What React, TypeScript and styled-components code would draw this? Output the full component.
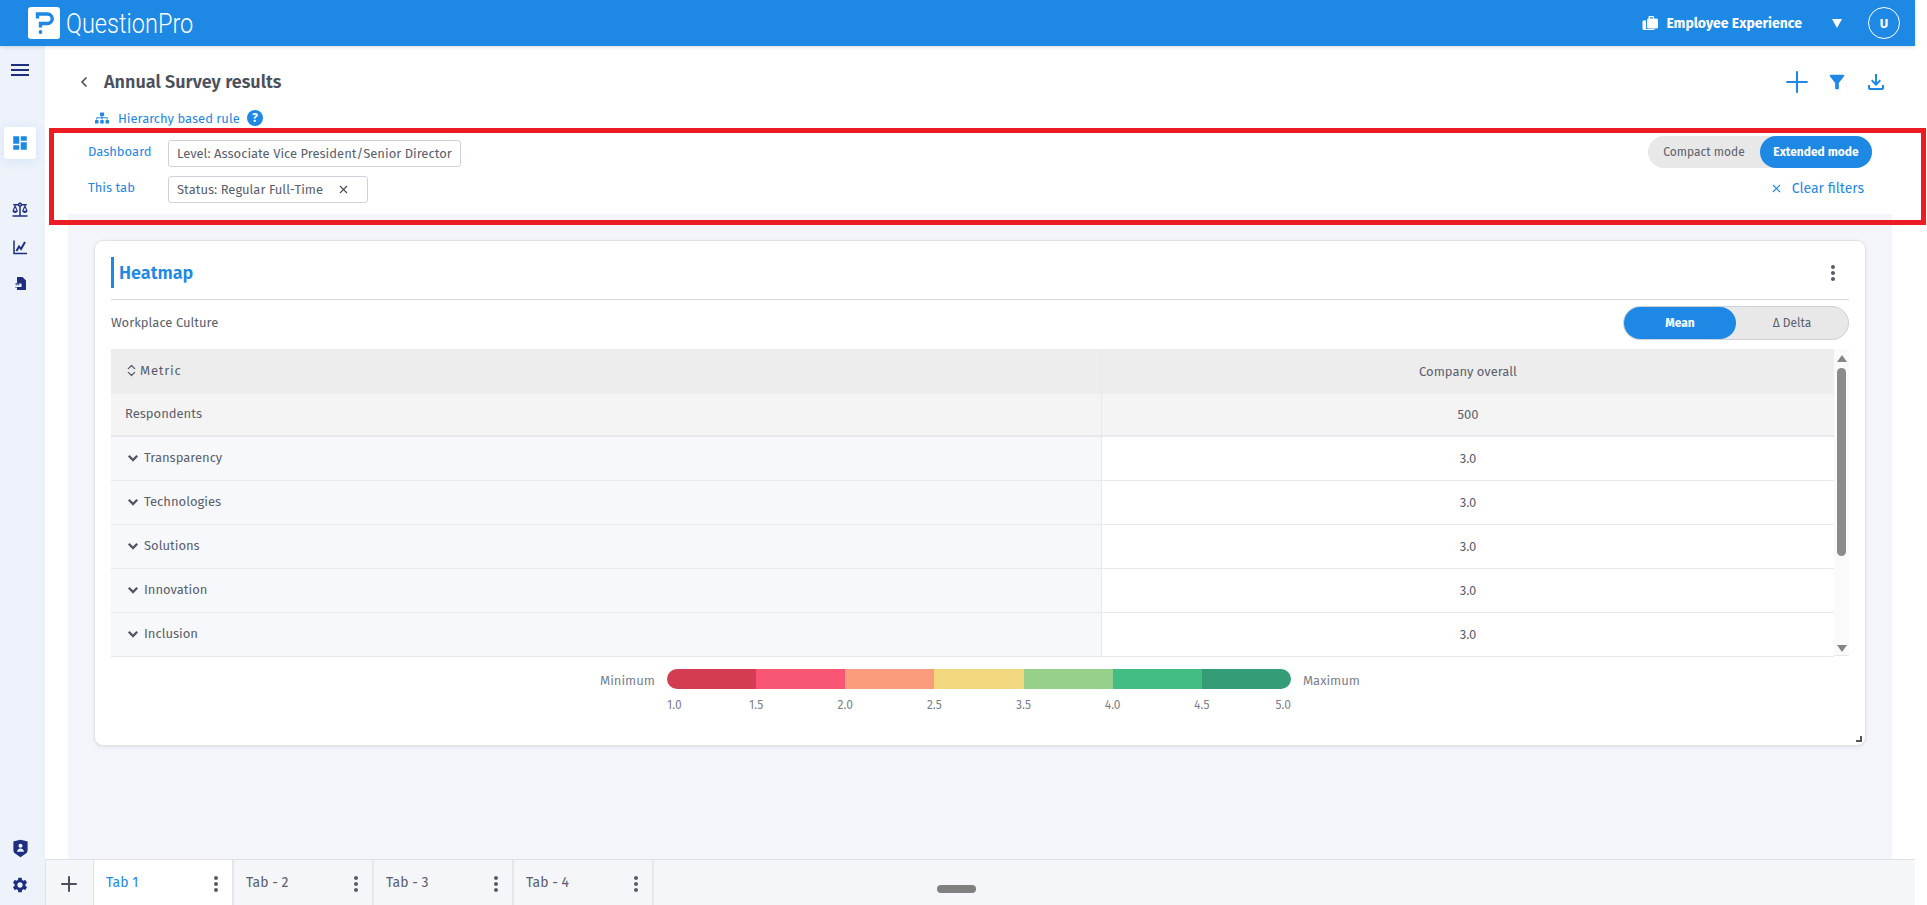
import React from "react";
import styled, { createGlobalStyle } from "styled-components";
import { ChevronLeft, ChevronsUpDown, Plus, X } from "lucide-react";
import {
  MdBalance,
  MdDashboard,
  MdFilterAlt,
  MdMoreVert,
  MdOutlineFileDownload,
  MdSettings,
} from "react-icons/md";
import { FaSitemap } from "react-icons/fa";
import { RiShieldUserFill } from "react-icons/ri";

const BLUE = "#1e88e5";
const NAVY = "#1f2f80";
const TEXT = "#5a606d";

const GlobalStyle = createGlobalStyle`
  html, body {
    margin: 0;
    padding: 0;
    background: #fff;
    overflow: hidden;
  }
  * {
    box-sizing: border-box;
  }
  body {
    font-family: "Fira Sans", "Roboto", "Liberation Sans", sans-serif;
    color: ${TEXT};
  }
`;

const Page = styled.div`
  position: relative;
  width: 1927px;
  height: 905px;
  overflow: hidden;
`;

const Shell = styled.div`
  display: flex;
  flex-direction: column;
  width: 1915px;
  height: 905px;
`;

const Header = styled.header`
  display: flex;
  align-items: center;
  flex: 0 0 46px;
  padding: 0 15px 0 28px;
  background: ${BLUE};
  box-shadow: 0 1px 4px rgba(0, 0, 0, 0.15);
  position: relative;
  z-index: 2;
`;

const LogoMark = styled.svg`
  width: 32px;
  height: 32px;
  flex: none;
`;

const LogoText = styled.span`
  margin-left: 6px;
  font-family: "Roboto", sans-serif;
  font-weight: 300;
  font-size: 28px;
  color: #fff;
  transform: scaleX(0.84);
  transform-origin: left center;
`;

const ProductSwitch = styled.div`
  display: flex;
  align-items: center;
  margin-left: auto;
  color: #fff;
  font-size: 14px;
  font-weight: 700;
`;

const ProductIcon = styled.svg`
  width: 16px;
  height: 14px;
  margin-right: 8px;
`;

const Caret = styled.span`
  width: 0;
  height: 0;
  margin: 0 26px 0 30px;
  border-left: 5px solid transparent;
  border-right: 5px solid transparent;
  border-top: 9px solid #fff;
`;

const Avatar = styled.div`
  display: flex;
  align-items: center;
  justify-content: center;
  width: 32px;
  height: 32px;
  border: 1px solid #fff;
  border-radius: 50%;
  color: #fff;
  font-size: 13px;
  font-weight: 700;
`;

const Body = styled.div`
  display: flex;
  flex: 1;
  min-height: 0;
`;

const Sidebar = styled.nav`
  display: flex;
  flex-direction: column;
  align-items: center;
  flex: 0 0 45px;
  padding: 0 5px 10px 0;
  background: #edf2fb;
  color: ${NAVY};
`;

const Hamburger = styled.div`
  display: flex;
  flex-direction: column;
  gap: 3px;
  width: 18px;
  margin-top: 18px;

  span {
    height: 2px;
    background: ${NAVY};
  }
`;

const ActiveNavItem = styled.div`
  display: flex;
  align-items: center;
  justify-content: center;
  width: 32px;
  height: 32px;
  margin-top: 51px;
  background: #fff;
  border-radius: 3px;
  color: ${BLUE};
  box-shadow: 0 2px 12px rgba(30, 136, 229, 0.12);
`;

const NavItem = styled.div<{ $top: number }>`
  display: flex;
  align-items: center;
  justify-content: center;
  width: 20px;
  height: 20px;
  margin-top: ${(p) => p.$top}px;
`;

const SidebarSpacer = styled.div`
  flex: 1;
`;

const Main = styled.div`
  display: flex;
  flex-direction: column;
  flex: 1;
  min-width: 0;
`;

const Workspace = styled.div`
  display: flex;
  flex-direction: column;
  flex: 1;
  min-height: 0;
  padding: 0 23px 0 23px;
`;

const TopPanel = styled.section`
  flex: 0 0 168px;
  padding: 24px 4px 0 8px;
  background: #fff;
`;

const TitleRow = styled.div`
  display: flex;
  align-items: center;
  height: 24px;
`;

const Title = styled.h1`
  margin: 0 0 0 12px;
  color: #4b505c;
  font-size: 18px;
  font-weight: 600;
`;

const TitleActions = styled.div`
  display: flex;
  align-items: center;
  margin-left: auto;
  color: ${BLUE};
`;

const ActionIcon = styled.span<{ $gap: number }>`
  display: flex;
  margin-left: ${(p) => p.$gap}px;
`;

const RuleRow = styled.div`
  display: flex;
  align-items: center;
  gap: 9px;
  height: 16px;
  margin: 16px 0 0 19px;
  color: ${BLUE};
  font-size: 13px;
`;

const HelpBadge = styled.span`
  display: flex;
  align-items: center;
  justify-content: center;
  width: 16px;
  height: 16px;
  margin-left: -2px;
  border-radius: 50%;
  background: ${BLUE};
  color: #fff;
  font-size: 12px;
  font-weight: 700;
`;

const FilterBar = styled.div`
  display: flex;
  justify-content: space-between;
  margin-top: 10px;
  padding: 0 16px 0 12px;
`;

const FilterRows = styled.div`
  display: flex;
  flex-direction: column;
  gap: 9px;
  padding-top: 4px;
`;

const FilterRow = styled.div`
  display: flex;
  align-items: center;
  height: 27px;
`;

const FilterLabel = styled.span`
  width: 80px;
  padding-bottom: 5px;
  color: ${BLUE};
  font-size: 13px;
`;

const Chip = styled.div`
  display: flex;
  align-items: center;
  height: 27px;
  padding: 0 8px;
  border: 1px solid #ced2da;
  border-radius: 3px;
  font-size: 13px;
`;

const ChipClose = styled.span`
  display: flex;
  margin: 0 9px 0 14px;
  color: #444a56;
`;

const FilterSide = styled.div`
  display: flex;
  flex-direction: column;
  align-items: flex-end;
`;

const ModeToggle = styled.div`
  display: flex;
  width: 224px;
  height: 32px;
  border-radius: 16px;
  background: #e8e8e8;
`;

const ModeOption = styled.span<{ $active?: boolean }>`
  display: flex;
  align-items: center;
  justify-content: center;
  flex: 1;
  border-radius: 16px;
  font-size: 12px;
  font-weight: ${(p) => (p.$active ? 700 : 400)};
  color: ${(p) => (p.$active ? "#fff" : TEXT)};
  background: ${(p) => (p.$active ? BLUE : "transparent")};
`;

const ClearFilters = styled.div`
  display: flex;
  align-items: center;
  gap: 9px;
  margin: 12px 8px 0 0;
  color: ${BLUE};
  font-size: 14px;
`;

const Canvas = styled.div`
  flex: 1;
  min-height: 0;
  padding: 26px;
  background: #f4f5fa;
`;

const Card = styled.article`
  position: relative;
  height: 506px;
  padding: 16px;
  background: #fff;
  border: 1px solid #e2e4ea;
  border-radius: 9px;
  box-shadow: 0 1px 3px rgba(40, 50, 80, 0.1);
`;

const CardHead = styled.div`
  display: flex;
  align-items: flex-start;
  justify-content: space-between;
  height: 43px;
  border-bottom: 1px solid #d6d8dc;
`;

const CardTitle = styled.h2`
  height: 31px;
  margin: 0;
  padding: 1px 0 0 5px;
  border-left: 3px solid ${BLUE};
  color: ${BLUE};
  font-size: 18px;
  font-weight: 600;
  line-height: 31px;
`;

const MoreButton = styled.span`
  display: flex;
  margin: 4px 4px 0 0;
  color: #565c69;
`;

const SubHead = styled.div`
  display: flex;
  align-items: center;
  justify-content: space-between;
  padding: 6px 0 9px;
  font-size: 13px;
`;

const SubTitle = styled.span`
  padding-bottom: 2px;
`;

const MetricToggle = styled.div`
  display: flex;
  width: 226px;
  height: 34px;
  border: 1px solid #cdd0d8;
  border-radius: 17px;
  background: #e8e8e8;
`;

const MetricOption = styled.span<{ $active?: boolean }>`
  display: flex;
  align-items: center;
  justify-content: center;
  flex: 1;
  border-radius: 17px;
  font-size: 12px;
  font-weight: ${(p) => (p.$active ? 700 : 400)};
  color: ${(p) => (p.$active ? "#fff" : TEXT)};
  background: ${(p) => (p.$active ? BLUE : "transparent")};
`;

const TableFrame = styled.div`
  display: flex;
  height: 307px;
  border-bottom: 1px solid #e6e7ec;
`;

const Table = styled.div`
  flex: 1;
  min-width: 0;
`;

const Row = styled.div<{ $height: number; $line: string; $left: string; $right: string }>`
  display: grid;
  grid-template-columns: 991px 1fr;
  height: ${(p) => p.$height}px;
  border-bottom: ${(p) => p.$line};
  background: ${(p) => p.$right};

  > :first-child {
    background: ${(p) => p.$left};
  }
`;

const NameCell = styled.div`
  display: flex;
  align-items: center;
  padding: 0 0 2px 14px;
  border-right: 1px solid #e8e9ee;
  font-size: 13px;
`;

const ValueCell = styled.div`
  display: flex;
  align-items: center;
  justify-content: center;
  padding-bottom: 1px;
  font-size: 13px;
`;

const MetricHead = styled.span`
  display: flex;
  align-items: center;
  gap: 1px;
  margin-left: -1px;
  letter-spacing: 0.8px;
`;

const RowChevron = styled.svg`
  flex: none;
  width: 20px;
  height: 20px;
  margin: 1px 1px 0 -2px;
  fill: none;
  stroke: #4f5562;
  stroke-width: 2.3;
`;

const ScrollRail = styled.div`
  display: flex;
  flex-direction: column;
  align-items: center;
  flex: 0 0 15px;
  padding: 6px 0 3px;
  background: #fafafa;
`;

const ScrollUp = styled.span`
  width: 0;
  height: 0;
  border-left: 5px solid transparent;
  border-right: 5px solid transparent;
  border-bottom: 7px solid #858585;
`;

const ScrollThumb = styled.span`
  width: 9px;
  height: 188px;
  margin-top: 6px;
  border-radius: 5px;
  background: #8b8b8b;
`;

const ScrollDown = styled.span`
  width: 0;
  height: 0;
  margin-top: auto;
  border-left: 5px solid transparent;
  border-right: 5px solid transparent;
  border-top: 7px solid #858585;
`;

const Legend = styled.div`
  display: flex;
  justify-content: center;
  gap: 12px;
  margin-top: 13px;
  color: #7a7f8c;
  font-size: 12px;
`;

const LegendEnd = styled.span`
  height: 20px;
  font-size: 13px;
  line-height: 23px;
`;

const LegendScale = styled.div`
  width: 624px;
`;

const LegendBar = styled.div`
  display: flex;
  height: 20px;
  border-radius: 10px;
  overflow: hidden;
`;

const LegendSwatch = styled.span<{ $color: string }>`
  flex: 1;
  background: ${(p) => p.$color};
`;

const LegendTicks = styled.div`
  display: flex;
  margin-top: 9px;
`;

const LegendTick = styled.span`
  flex: 1;
  min-width: 0;
  white-space: nowrap;

  span {
    display: inline-block;
    transform: translateX(-50%);
  }

  &:first-child span {
    transform: none;
  }

  &:last-child {
    flex: 0 0 0;
  }

  &:last-child span {
    transform: translateX(-100%);
  }
`;

const ResizeHandle = styled.span`
  position: absolute;
  right: 3px;
  bottom: 3px;
  width: 6px;
  height: 6px;
  border-right: 2px solid #555;
  border-bottom: 2px solid #555;
`;

const TabBar = styled.div`
  position: relative;
  display: flex;
  flex: 0 0 46px;
  border-top: 1px solid #dfe1e8;
  border-left: 1px solid #dfe1e8;
  background: #f5f6f9;
`;

const AddTab = styled.div`
  display: flex;
  align-items: center;
  justify-content: center;
  flex: 0 0 48px;
  padding: 3px 2px 0 0;
  border-right: 1px solid #dfe1e8;
  color: #4b505c;
`;

const Tab = styled.div<{ $active?: boolean }>`
  display: flex;
  align-items: center;
  justify-content: space-between;
  flex: 0 0 140px;
  padding: 0 4px 0 12px;
  border-right: 2px solid #e6e7ea;
  background: ${(p) => (p.$active ? "#fff" : "transparent")};
  color: ${(p) => (p.$active ? BLUE : TEXT)};
  font-size: 14px;

  svg {
    color: #565c69;
    margin-top: 2px;
  }
`;

const DragHandle = styled.span`
  position: absolute;
  left: 891px;
  top: 25px;
  width: 39px;
  height: 8px;
  border-radius: 4px;
  background: #808080;
`;

const Highlight = styled.div`
  position: absolute;
  left: 49px;
  top: 128px;
  width: 1877px;
  height: 97px;
  border: 5px solid #ed1c24;
  pointer-events: none;
`;

const legendColors = ["#d43d51", "#f95574", "#f99b7d", "#f2d97f", "#97d08b", "#43bd84", "#349c76"];
const legendTicks = ["1.0", "1.5", "2.0", "2.5", "3.5", "4.0", "4.5", "5.0"];
const metrics = ["Transparency", "Technologies", "Solutions", "Innovation", "Inclusion"];
const tabs = ["Tab 1", "Tab - 2", "Tab - 3", "Tab - 4"];

export default function App() {
  return (
    <Page>
      <GlobalStyle />
      <Shell>
        <Header>
          <LogoMark viewBox="0 0 32 32">
            <rect width="32" height="32" rx="3" fill="#fff" />
            <path
              d="M9.500 11.500V7h10a4.750 4.750 0 0 1 0 9.500H12.500V20.500"
              fill="none"
              stroke={BLUE}
              strokeWidth="3.4"
            />
            <circle cx="12.500" cy="25" r="1.900" fill={BLUE} />
          </LogoMark>
          <LogoText>QuestionPro</LogoText>
          <ProductSwitch>
            <ProductIcon viewBox="0 0 16 14" fill="#fff">
              <path d="M1.500 4.500H4V13h8.500v.500a.5.5 0 0 1-.5.500H2A1.500 1.500 0 0 1 .5 12.500v-7a1 1 0 0 1 1-1Z" />
              <path d="M7.500 0h3.500a1 1 0 0 1 1 1v1.500h2.500A1.500 1.500 0 0 1 16 4v7a1.500 1.500 0 0 1-1.500 1.500h-8A1.500 1.500 0 0 1 5 11V4a1.500 1.500 0 0 1 1.500-1.500V1a1 1 0 0 1 1-1Zm.5 1.200v1.300h3V1.200Z" />
            </ProductIcon>
            Employee Experience
            <Caret />
            <Avatar>U</Avatar>
          </ProductSwitch>
        </Header>
        <Body>
          <Sidebar>
            <Hamburger>
              <span />
              <span />
              <span />
            </Hamburger>
            <ActiveNavItem>
              <MdDashboard size={18} />
            </ActiveNavItem>
            <NavItem $top={41}>
              <MdBalance size={18} />
            </NavItem>
            <NavItem $top={17}>
              <svg width="16" height="16" viewBox="0 0 16 16" fill="none" stroke={NAVY}>
                <path d="M2 1.500V14.500H15" strokeWidth="1.500" />
                <path d="M4.500 12L7 7.500l2 2.500 4-7" strokeWidth="2" />
              </svg>
            </NavItem>
            <NavItem $top={17}>
              <svg width="16" height="16" viewBox="0 0 16 16">
                <path d="M5 1h5.500L14 4.500V14H5V11.500H3V7.500h2Z" fill={NAVY} />
                <rect x="3" y="7.500" width="6.500" height="3.500" rx="0.5" fill="#fff" />
                <text x="3.400" y="10.400" fontSize="3.400" fontWeight="700" fill={NAVY}>
                  PP
                </text>
              </svg>
            </NavItem>
            <SidebarSpacer />
            <NavItem $top={0}>
              <RiShieldUserFill size={19} />
            </NavItem>
            <NavItem $top={17}>
              <MdSettings size={18} />
            </NavItem>
          </Sidebar>
          <Main>
            <Workspace>
              <TopPanel>
                <TitleRow>
                  <ChevronLeft size={16} strokeWidth={2.6} color="#4b505c" />
                  <Title>Annual Survey results</Title>
                  <TitleActions>
                    <ActionIcon $gap={0}>
                      <Plus size={34} strokeWidth={1.5} />
                    </ActionIcon>
                    <ActionIcon $gap={12}>
                      <MdFilterAlt size={22} />
                    </ActionIcon>
                    <ActionIcon $gap={16}>
                      <MdOutlineFileDownload size={24} />
                    </ActionIcon>
                  </TitleActions>
                </TitleRow>
                <RuleRow>
                  <FaSitemap size={14} />
                  Hierarchy based rule
                  <HelpBadge>?</HelpBadge>
                </RuleRow>
                <FilterBar>
                  <FilterRows>
                    <FilterRow>
                      <FilterLabel>Dashboard</FilterLabel>
                      <Chip>Level: Associate Vice President/Senior Director</Chip>
                    </FilterRow>
                    <FilterRow>
                      <FilterLabel>This tab</FilterLabel>
                      <Chip>
                        Status: Regular Full-Time
                        <ChipClose>
                          <X size={13} />
                        </ChipClose>
                      </Chip>
                    </FilterRow>
                  </FilterRows>
                  <FilterSide>
                    <ModeToggle>
                      <ModeOption>Compact mode</ModeOption>
                      <ModeOption $active>Extended mode</ModeOption>
                    </ModeToggle>
                    <ClearFilters>
                      <X size={13} />
                      Clear filters
                    </ClearFilters>
                  </FilterSide>
                </FilterBar>
              </TopPanel>
              <Canvas>
                <Card>
                  <CardHead>
                    <CardTitle>Heatmap</CardTitle>
                    <MoreButton>
                      <MdMoreVert size={24} />
                    </MoreButton>
                  </CardHead>
                  <SubHead>
                    <SubTitle>Workplace Culture</SubTitle>
                    <MetricToggle>
                      <MetricOption $active>Mean</MetricOption>
                      <MetricOption>Δ Delta</MetricOption>
                    </MetricToggle>
                  </SubHead>
                  <TableFrame>
                    <Table>
                      <Row $height={45} $line="none" $left="#ededed" $right="#ededed">
                        <NameCell>
                          <MetricHead>
                            <ChevronsUpDown size={15} strokeWidth={2.2} />
                            Metric
                          </MetricHead>
                        </NameCell>
                        <ValueCell>Company overall</ValueCell>
                      </Row>
                      <Row $height={43} $line="2px solid #e8e9ee" $left="#f4f4f4" $right="#f4f4f4">
                        <NameCell>Respondents</NameCell>
                        <ValueCell>500</ValueCell>
                      </Row>
                      {metrics.map((name) => (
                        <Row key={name} $height={44} $line="1px solid #e8e9ee" $left="#f7f8fb" $right="#fff">
                          <NameCell>
                            <RowChevron viewBox="0 0 20 20">
                              <path d="M5.800 7.800L10 12l4.200-4.200" />
                            </RowChevron>
                            {name}
                          </NameCell>
                          <ValueCell>3.0</ValueCell>
                        </Row>
                      ))}
                    </Table>
                    <ScrollRail>
                      <ScrollUp />
                      <ScrollThumb />
                      <ScrollDown />
                    </ScrollRail>
                  </TableFrame>
                  <Legend>
                    <LegendEnd>Minimum</LegendEnd>
                    <LegendScale>
                      <LegendBar>
                        {legendColors.map((color) => (
                          <LegendSwatch key={color} $color={color} />
                        ))}
                      </LegendBar>
                      <LegendTicks>
                        {legendTicks.map((tick) => (
                          <LegendTick key={tick}>
                            <span>{tick}</span>
                          </LegendTick>
                        ))}
                      </LegendTicks>
                    </LegendScale>
                    <LegendEnd>Maximum</LegendEnd>
                  </Legend>
                  <ResizeHandle />
                </Card>
              </Canvas>
            </Workspace>
            <TabBar>
              <AddTab>
                <Plus size={24} strokeWidth={2} />
              </AddTab>
              {tabs.map((tab, i) => (
                <Tab key={tab} $active={i === 0}>
                  {tab}
                  <MdMoreVert size={24} />
                </Tab>
              ))}
              <DragHandle />
            </TabBar>
          </Main>
        </Body>
      </Shell>
      <Highlight />
    </Page>
  );
}
